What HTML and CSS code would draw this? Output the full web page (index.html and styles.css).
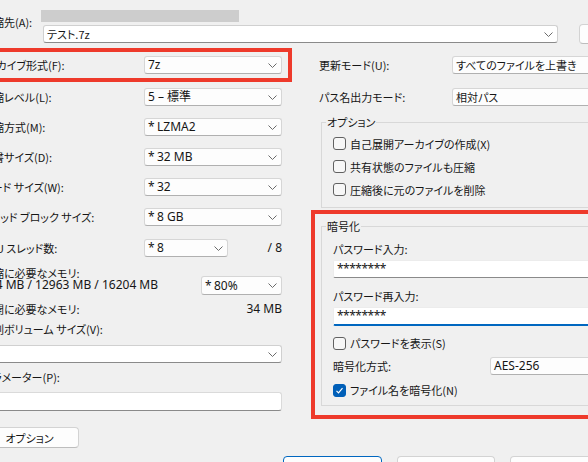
FILE: index.html
```html
<!DOCTYPE html>
<html lang="ja">
<head>
<meta charset="utf-8">
<title>アーカイブに追加</title>
<link rel="stylesheet" href="styles.css">
</head>
<body>
<div class="dlg">
  <div class="top">
    <div class="top-lbl">圧縮先(A):</div>
    <div class="top-main">
      <div class="pathbar"></div>
      <div class="top-row">
        <div class="combo edit archive"><span>テスト.7z</span><svg class="chev" viewBox="0 0 9 5"><path d="M0.5 0.5l4 4 4-4"/></svg></div>
        <div class="btn browse"></div>
      </div>
    </div>
  </div>

  <div class="cols">
    <div class="left">
      <div class="row"><span class="lbl"><span class="shift">アーカイブ形式(F):</span></span><div class="combo c138"><span class="v">7z</span><svg class="chev" viewBox="0 0 9 5"><path d="M0.5 0.5l4 4 4-4"/></svg></div></div>
      <div class="row mt14"><span class="lbl">圧縮レベル(L):</span><div class="combo c138"><span class="v">5 – 標準</span><svg class="chev" viewBox="0 0 9 5"><path d="M0.5 0.5l4 4 4-4"/></svg></div></div>
      <div class="row mt12"><span class="lbl">圧縮方式(M):</span><div class="combo c138"><span class="v"><span class="ast">*</span>LZMA2</span><svg class="chev" viewBox="0 0 9 5"><path d="M0.5 0.5l4 4 4-4"/></svg></div></div>
      <div class="row mt12"><span class="lbl">辞書サイズ(D):</span><div class="combo c138"><span class="v"><span class="ast">*</span>32 MB</span><svg class="chev" viewBox="0 0 9 5"><path d="M0.5 0.5l4 4 4-4"/></svg></div></div>
      <div class="row mt12"><span class="lbl">ワード サイズ(W):</span><div class="combo c138"><span class="v"><span class="ast">*</span>32</span><svg class="chev" viewBox="0 0 9 5"><path d="M0.5 0.5l4 4 4-4"/></svg></div></div>
      <div class="row mt12"><span class="lbl">ソリッド ブロック サイズ:</span><div class="combo c138"><span class="v"><span class="ast">*</span>8 GB</span><svg class="chev" viewBox="0 0 9 5"><path d="M0.5 0.5l4 4 4-4"/></svg></div></div>
      <div class="row mt13"><span class="lbl">CPU スレッド数:</span><div class="combo c84"><span class="v"><span class="ast">*</span>8</span><svg class="chev" viewBox="0 0 9 5"><path d="M0.5 0.5l4 4 4-4"/></svg></div><span class="v slash">/ 8</span></div>
      <div class="mem">
        <div class="lbl mem-lbl"><span class="line">圧縮に必要なメモリ:</span><span class="line v">324 MB / 12963 MB / 16204 MB</span></div>
        <div class="combo c81"><span class="v"><span class="ast">*</span>80%</span><svg class="chev" viewBox="0 0 9 5"><path d="M0.5 0.5l4 4 4-4"/></svg></div>
      </div>
      <div class="row16 mt6"><span class="lbl">展開に必要なメモリ:</span><span class="v">34 MB</span></div>
      <div class="row16 mt4"><span class="lbl">分割ボリューム サイズ(V):</span></div>
      <div class="combo edit full mt8"><span></span><svg class="chev" viewBox="0 0 9 5"><path d="M0.5 0.5l4 4 4-4"/></svg></div>
      <div class="row16 mt6"><span class="lbl">パラメーター(P):</span></div>
      <div class="input full param mt7"></div>
      <div class="btn optbtn">オプション</div>
    </div>

    <div class="right">
      <div class="row"><span class="rlbl">更新モード(U):</span><div class="combo c180"><span>すべてのファイルを上書き</span><svg class="chev" viewBox="0 0 9 5"><path d="M0.5 0.5l4 4 4-4"/></svg></div></div>
      <div class="row mt14"><span class="rlbl">パス名出力モード:</span><div class="combo c180"><span>相対パス</span><svg class="chev" viewBox="0 0 9 5"><path d="M0.5 0.5l4 4 4-4"/></svg></div></div>

      <fieldset class="group opts">
        <legend>オプション</legend>
        <div class="cbrow first"><span class="cb"></span><span>自己展開アーカイブの作成(X)</span></div>
        <div class="cbrow"><span class="cb"></span><span>共有状態のファイルも圧縮</span></div>
        <div class="cbrow"><span class="cb"></span><span>圧縮後に元のファイルを削除</span></div>
      </fieldset>

      <fieldset class="group enc">
        <legend>暗号化</legend>
        <div class="row16 mt7">パスワード入力:</div>
        <div class="pw mt3"><span class="v">********</span></div>
        <div class="row16 mt10">パスワード再入力:</div>
        <div class="pw focus mt3"><span class="v">********</span></div>
        <div class="cbrow2 mt8"><span class="cb"></span><span>パスワードを表示(S)</span></div>
        <div class="row mt5"><span class="mlbl">暗号化方式:</span><div class="combo c120"><span class="v">AES-256</span><svg class="chev" viewBox="0 0 9 5"><path d="M0.5 0.5l4 4 4-4"/></svg></div></div>
        <div class="cbrow2 mt6"><span class="cb on"><svg viewBox="0 0 11 11"><path d="M2.5 5.8l2 2 4-4.6"/></svg></span><span>ファイル名を暗号化(N)</span></div>
      </fieldset>
    </div>
  </div>

  <div class="footer">
    <div class="btn fbtn def">OK</div>
    <div class="btn fbtn">キャンセル</div>
    <div class="btn fbtn">ヘルプ</div>
  </div>
</div>

<div class="mark mark1"></div>
<div class="mark mark2"></div>
</body>
</html>
```

FILE: styles.css
```css
* { box-sizing: border-box; }
html, body { margin: 0; padding: 0; }
body {
  width: 588px;
  height: 462px;
  overflow: hidden;
  position: relative;
  background: #f0f0f0;
  color: #161616;
  font: 11px/16px "Noto Sans CJK JP", sans-serif;
  font-feature-settings: "palt" 1;
}
.v { font-family: "Noto Sans", "Noto Sans CJK JP", sans-serif; font-size: 12px; }
.ast { display: inline-block; width: 9px; }
.shift { display: inline-block; margin-left: -6px; }

.dlg { margin-left: -18px; padding-top: 10px; width: 700px; }

.top { display: flex; }
.top-lbl { width: 59px; margin-top: 4px; white-space: nowrap; }
.pathbar { width: 198px; height: 12px; background: #cdcdcd; }
.top-row { display: flex; align-items: center; margin-top: 2px; margin-left: 2px; }
.archive { width: 515px; }
.browse { width: 40px; height: 20px; margin-left: 21px; }

.cols { display: flex; margin-top: 12px; align-items: flex-start; }
.left { width: 300px; display: flex; flex-direction: column; }
.right { margin-left: 37px; width: 330px; display: flex; flex-direction: column; }

.row { display: flex; align-items: center; height: 18px; white-space: nowrap; }
.row16 { display: flex; align-items: center; height: 16px; white-space: nowrap; }
.lbl { flex: 1; white-space: nowrap; }
.rlbl { width: 133px; flex: none; }
.mlbl { width: 157px; flex: none; }

.mt3 { margin-top: 3px; }
.mt4 { margin-top: 4px; }
.mt5 { margin-top: 5px; }
.mt6 { margin-top: 6px; }
.mt7 { margin-top: 7px; }
.mt8 { margin-top: 8px; }
.mt10 { margin-top: 10px; }
.mt12 { margin-top: 12px; }
.mt13 { margin-top: 13px; }
.mt14 { margin-top: 14px; }

.combo {
  display: flex;
  align-items: center;
  justify-content: space-between;
  height: 18px;
  flex: none;
  background: #fdfdfd;
  border: 1px solid #d6d6d6;
  border-bottom-color: #b0b0b0;
  border-radius: 3px;
  padding: 0 4px 0 3px;
  white-space: nowrap;
  overflow: hidden;
}
.combo.edit { background: #ffffff; border-color: #d0d0d0; border-bottom-color: #8a8a8a; }
.chev { width: 9px; height: 5px; flex: none; fill: none; stroke: #6b6b6b; stroke-width: 1; }
.c138 { width: 138px; }
.c84 { width: 84px; }
.c81 { width: 81px; height: 19px; align-self: flex-end; }
.c180 { width: 180px; }
.c120 { width: 120px; }
.full { width: 300px; }
.slash { width: 54px; text-align: right; }

.mem { display: flex; height: 28px; margin-top: 10px; }
.mem-lbl { line-height: 12px; }
.mem-lbl .line { display: block; }

.input {
  height: 19px;
  background: #ffffff;
  border: 1px solid #dadada;
  border-bottom-color: #8a8a8a;
  border-radius: 3px;
}

.btn {
  display: flex;
  align-items: center;
  justify-content: center;
  background: #fdfdfd;
  border: 1px solid #d3d3d3;
  border-bottom-color: #bdbdbd;
  border-radius: 4px;
  flex: none;
}
.optbtn { width: 99px; height: 21px; margin-top: 16px; margin-left: -2px; }

.group {
  margin: 0;
  border: 1px solid #d8d8d8;
  padding: 0 0 6px 11px;
  min-width: 0;
  margin-left: 2px;
  width: 320px;
}
.group legend { padding: 0 1px; margin-left: -7px; line-height: 16px; }
.opts { margin-top: 8px; }
.enc { margin-top: 10px; }

.cbrow { display: flex; align-items: center; height: 23px; white-space: nowrap; }
.cbrow.first { margin-top: 2px; }
.cbrow2 { display: flex; align-items: center; height: 18px; white-space: nowrap; }
.cb {
  width: 13px;
  height: 13px;
  flex: none;
  border: 1px solid #616161;
  border-radius: 3px;
  background: #f7f7f7;
  margin-right: 4px;
  display: flex;
}
.cb.on { background: #005fb8; border-color: #005fb8; }
.cb svg { width: 11px; height: 11px; fill: none; stroke: #ffffff; stroke-width: 1.2; }

.pw {
  height: 18px;
  width: 300px;
  background: #ffffff;
  border: 1px solid #ececec;
  border-bottom: 1px solid #8a8a8a;
  border-radius: 2px;
  padding-left: 3px;
  display: flex;
  align-items: center;
}
.pw .v { letter-spacing: -0.5px; }
.pw.focus { height: 19px; border-bottom: 2px solid #0067c0; }

.footer { display: flex; gap: 15px; margin-top: 8px; margin-left: 301px; }
.fbtn { width: 98px; height: 23px; }
.fbtn.def { width: 99px; border-color: #0067c0; }

.mark { position: absolute; border: 4px solid #ee3a2b; }
.mark1 { left: -10px; top: 48px; width: 302px; height: 34px; }
.mark2 { left: 311px; top: 210px; width: 300px; height: 209px; }
```
